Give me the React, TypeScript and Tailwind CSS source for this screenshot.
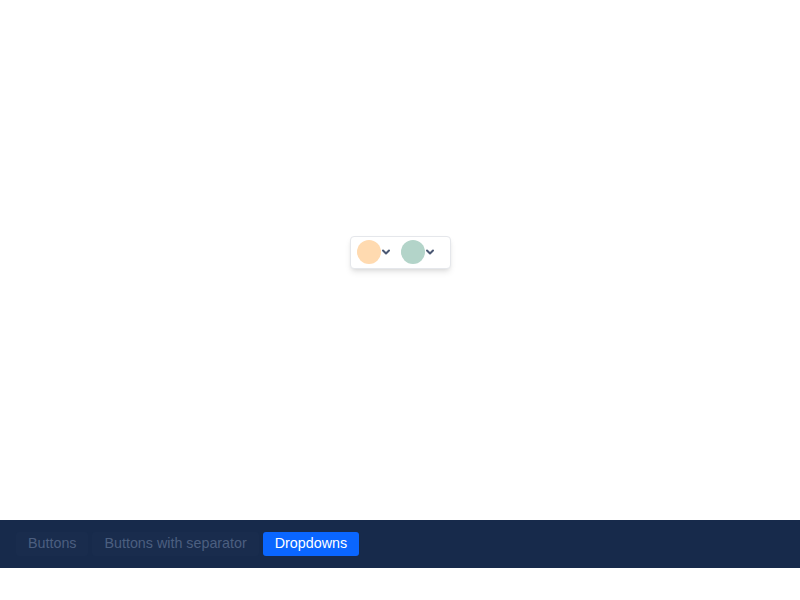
import React, { useState } from 'react';

const tabs = ['Buttons', 'Buttons with separator', 'Dropdowns'];

const swatches = ['#ffdab0', '#b3d4c9'];

function Chevron() {
  return (
    <svg width="10" height="8" viewBox="0 0 10 8" className="shrink-0">
      <polyline
        points="2,2.5 5,5.5 8,2.5"
        fill="none"
        stroke="#4a5873"
        strokeWidth="2"
        strokeLinecap="round"
        strokeLinejoin="round"
      />
    </svg>
  );
}

export default function App() {
  const [active, setActive] = useState('Dropdowns');

  return (
    <div className="flex h-[600px] w-[800px] flex-col bg-white font-['Liberation_Sans',Arial,sans-serif]">
      <div className="flex h-[520px] items-center justify-center pb-4">
        <div className="flex h-[33px] w-[101px] items-center gap-[10px] rounded border border-gray-200 bg-white pl-[6px] shadow-md">
          {swatches.map((c) => (
            <button key={c} type="button" className="flex items-center">
              <span className="h-6 w-6 rounded-full" style={{ backgroundColor: c }} />
              <Chevron />
            </button>
          ))}
        </div>
      </div>

      <div className="flex h-12 items-center gap-1 bg-[#172a4b] px-4">
        {tabs.map((t) =>
          t === active ? (
            <button
              key={t}
              type="button"
              onClick={() => setActive(t)}
              className="h-6 rounded-[3px] bg-[#0a66ff] px-3 text-[14.3px] text-white"
            >
              {t}
            </button>
          ) : (
            <button
              key={t}
              type="button"
              onClick={() => setActive(t)}
              className="h-6 rounded-[3px] bg-[#192c4d] px-3 text-[14.3px] text-[#4c5f80]"
            >
              {t}
            </button>
          )
        )}
      </div>
    </div>
  );
}
